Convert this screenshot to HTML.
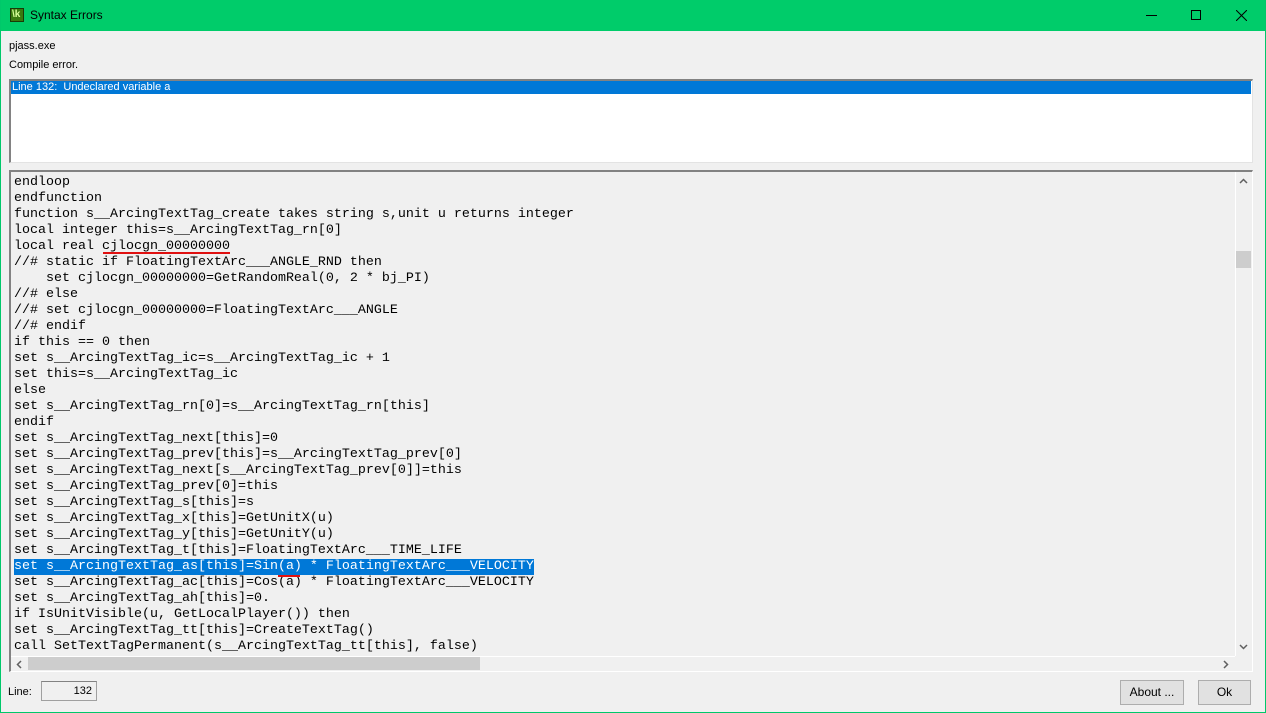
<!DOCTYPE html>
<html><head><meta charset="utf-8"><style>
*{margin:0;padding:0;box-sizing:border-box}
body{width:1266px;height:713px;overflow:hidden;background:#f0f0f0;font-family:"Liberation Sans",sans-serif;font-size:11px;color:#000;position:relative}
.win{position:absolute;left:0;top:0;width:1266px;height:713px;border:1px solid #00c86a;border-top:none}
.title{position:absolute;left:0;top:0;width:1266px;height:31px;background:#00cc6a}
.abs{position:absolute}
.code{position:absolute;left:14px;top:175px;font-family:"Liberation Mono",monospace;font-size:13.33px;line-height:16px;white-space:pre;color:#000}
.code div{height:16px}
.hl{background:#0078d7;color:#fff;display:inline-block}
.btn{position:absolute;background:#e1e1e1;border:1px solid #adadad;text-align:center;font-size:12px;line-height:22px}
</style></head><body>
<div class="title"></div>
<div class="abs" style="left:10px;top:8px;width:14px;height:14px;background:#3a7a10;border:1px solid #1a3a08"></div>
<div class="abs" style="left:12px;top:9px;font-size:10px;color:#d8ff9a;font-weight:bold">\k</div>
<div class="abs" style="left:30px;top:8px;font-size:12px">Syntax Errors</div>
<div class="abs" style="left:1146px;top:15px;width:11px;height:1px;background:#000"></div>
<div class="abs" style="left:1191px;top:10px;width:10px;height:10px;border:1px solid #000"></div>
<svg class="abs" style="left:1236px;top:10px" width="11" height="11"><path d="M0 0L11 11M11 0L0 11" stroke="#000" stroke-width="1"/></svg>
<div class="win"></div>
<div class="abs" style="left:9px;top:40px">pjass.exe</div>
<div class="abs" style="left:9px;top:59px">Compile error.</div>
<div class="abs" style="left:9px;top:79px;width:1244px;height:84px;background:#fff;border-top:2px solid #828282;border-left:2px solid #828282;border-right:1px solid #e3e3e3;border-bottom:1px solid #e3e3e3"></div>
<div class="abs" style="left:11px;top:81px;width:1240px;height:13px;background:#0078d7;color:#fff;padding-left:1px;line-height:13px">Line 132:&nbsp; Undeclared variable a</div>
<div class="abs" style="left:9px;top:170px;width:1244px;height:502px;border-top:2px solid #828282;border-left:2px solid #828282;border-right:1px solid #fff;border-bottom:1px solid #fff"></div>
<div class="abs" style="left:1235px;top:172px;width:17px;height:484px;background:#f0f0f0;border-left:1px solid #fff"></div>
<div class="abs" style="left:1236px;top:251px;width:15px;height:17px;background:#cdcdcd"></div>
<svg class="abs" style="left:1239px;top:178px" width="9" height="6"><path d="M1 5L4.5 1.5L8 5" stroke="#606060" stroke-width="1.5" fill="none"/></svg>
<svg class="abs" style="left:1239px;top:644px" width="9" height="6"><path d="M1 1L4.5 4.5L8 1" stroke="#606060" stroke-width="1.5" fill="none"/></svg>
<div class="abs" style="left:11px;top:656px;width:1224px;height:15px;background:#f0f0f0;border-top:1px solid #fff"></div>
<div class="abs" style="left:28px;top:657px;width:452px;height:13px;background:#cdcdcd"></div>
<svg class="abs" style="left:16px;top:660px" width="6" height="9"><path d="M5 1L1.5 4.5L5 8" stroke="#606060" stroke-width="1.5" fill="none"/></svg>
<svg class="abs" style="left:1223px;top:660px" width="6" height="9"><path d="M1 1L4.5 4.5L1 8" stroke="#606060" stroke-width="1.5" fill="none"/></svg>
<div class="code"><div>endloop</div><div>endfunction</div><div>function s__ArcingTextTag_create takes string s,unit u returns integer</div><div>local integer this=s__ArcingTextTag_rn[0]</div><div>local real cjlocgn_00000000</div><div>//# static if FloatingTextArc___ANGLE_RND then</div><div>    set cjlocgn_00000000=GetRandomReal(0, 2 * bj_PI)</div><div>//# else</div><div>//# set cjlocgn_00000000=FloatingTextArc___ANGLE</div><div>//# endif</div><div>if this == 0 then</div><div>set s__ArcingTextTag_ic=s__ArcingTextTag_ic + 1</div><div>set this=s__ArcingTextTag_ic</div><div>else</div><div>set s__ArcingTextTag_rn[0]=s__ArcingTextTag_rn[this]</div><div>endif</div><div>set s__ArcingTextTag_next[this]=0</div><div>set s__ArcingTextTag_prev[this]=s__ArcingTextTag_prev[0]</div><div>set s__ArcingTextTag_next[s__ArcingTextTag_prev[0]]=this</div><div>set s__ArcingTextTag_prev[0]=this</div><div>set s__ArcingTextTag_s[this]=s</div><div>set s__ArcingTextTag_x[this]=GetUnitX(u)</div><div>set s__ArcingTextTag_y[this]=GetUnitY(u)</div><div>set s__ArcingTextTag_t[this]=FloatingTextArc___TIME_LIFE</div><div><span class="hl">set s__ArcingTextTag_as[this]=Sin(a) * FloatingTextArc___VELOCITY</span></div><div>set s__ArcingTextTag_ac[this]=Cos(a) * FloatingTextArc___VELOCITY</div><div>set s__ArcingTextTag_ah[this]=0.</div><div>if IsUnitVisible(u, GetLocalPlayer()) then</div><div>set s__ArcingTextTag_tt[this]=CreateTextTag()</div><div>call SetTextTagPermanent(s__ArcingTextTag_tt[this], false)</div></div>
<div class="abs" style="left:103px;top:252px;width:127px;height:2px;background:#e01010"></div>
<div class="abs" style="left:278px;top:575px;width:22px;height:2px;background:#e01010"></div>
<div class="abs" style="left:8px;top:686px">Line:</div>
<div class="abs" style="left:41px;top:681px;width:56px;height:20px;border:1px solid #a0a0a0;border-top-color:#828282;text-align:right;padding-right:4px;line-height:18px">132</div>
<div class="btn" style="left:1120px;top:680px;width:64px;height:25px">About ...</div>
<div class="btn" style="left:1198px;top:680px;width:53px;height:25px">Ok</div>
</body></html>
